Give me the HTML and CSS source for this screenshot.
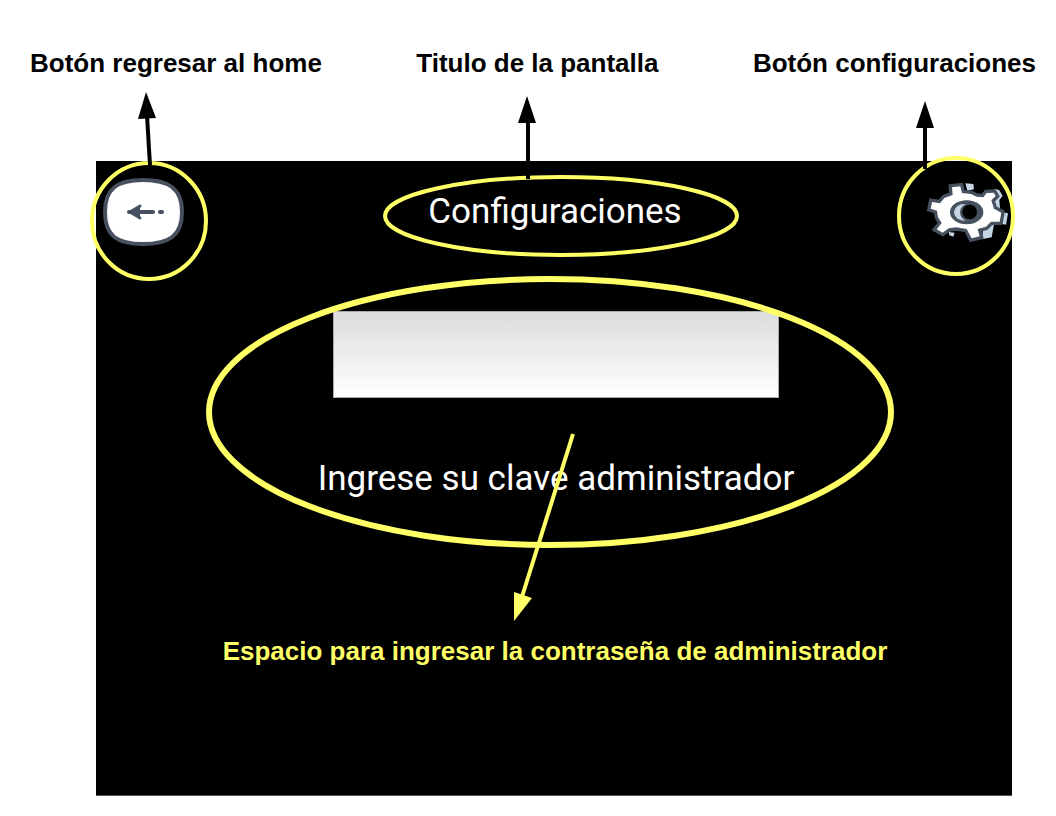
FILE: index.html
```html
<!DOCTYPE html>
<html lang="es">
<head>
<meta charset="utf-8">
<meta name="viewport" content="width=device-width, initial-scale=1">
<title>Configuraciones</title>
<link rel="stylesheet" href="styles.css">
</head>
<body>
<main class="guide">
  <div class="captions">
    <p class="caption">Botón regresar al home</p>
    <p class="caption">Titulo de la pantalla</p>
    <p class="caption">Botón configuraciones</p>
  </div>

  <section class="screen">
    <header class="header">
      <div class="anchor">
        <button class="icon-button" type="button" aria-label="Regresar al home">
          <svg class="icon" viewBox="0 0 82 68" aria-hidden="true">
            <path d="M3 34C3 10 16 2 41 2S80 10 80 34S67 66 41 66S3 58 3 34Z" fill="#fff" stroke="#46505f" stroke-width="4"/>
            <path d="M27 34H51M58 34H60" fill="none" stroke="#46505f" stroke-width="4" stroke-linecap="round"/>
            <path d="M38 28L28 34L38 40" fill="#46505f" stroke="#46505f" stroke-width="3" stroke-linecap="round" stroke-linejoin="round"/>
          </svg>
        </button>
        <svg class="note" viewBox="0 0 82 68" aria-hidden="true">
          <ellipse class="ring" cx="47" cy="43" rx="57" ry="58"/>
          <path class="arrow-line" d="M48 -13L45 -62"/>
          <path class="arrow-head" d="M44 -86L54 -60L36 -59Z"/>
        </svg>
      </div>

      <div class="anchor">
        <h1 class="title">Configuraciones</h1>
        <svg class="note note-title" viewBox="0 0 252 68" aria-hidden="true">
          <ellipse class="ring" cx="132" cy="38" rx="176" ry="39"/>
          <path class="arrow-line" d="M99 1V-56"/>
          <path class="arrow-head" d="M98 -82L107 -55H89Z"/>
        </svg>
      </div>

      <div class="anchor">
        <button class="icon-button" type="button" aria-label="Configuraciones">
          <svg class="icon" viewBox="0 12 246 204" aria-hidden="true">
            <path d="M118 28L142 30L144 46L124 50ZM206 44L220 49L230 66L220 78L222 102L208 108L200 76ZM226 114L246 118L240 152L226 149ZM172 160L204 150L197 190L168 196ZM68 174L86 176L82 188L70 184Z" fill="#c5d5e6"/>
            <path d="M78 40L103 37L108 57L135 60L152 68L172 70L182 57L203 56L209 66L196 79L204 104L226 116L221 143L195 143L180 158L155 165L161 187L137 193L122 165L90 160L68 163L50 176L32 166L47 147L36 130L33 110L14 104L18 84L42 88L55 72L80 63Z" fill="#46505f" stroke="#46505f" stroke-width="20" stroke-linejoin="miter"/>
            <path d="M78 40L103 37L108 57L135 60L152 68L172 70L182 57L203 56L209 66L196 79L204 104L226 116L221 143L195 143L180 158L155 165L161 187L137 193L122 165L90 160L68 163L50 176L32 166L47 147L36 130L33 110L14 104L18 84L42 88L55 72L80 63Z" fill="#fff"/>
            <ellipse cx="122" cy="115" rx="50" ry="36" fill="#46505f"/>
            <ellipse cx="114" cy="115" rx="30" ry="25" fill="#c5d5e6"/>
            <ellipse cx="130" cy="115" rx="28" ry="27" fill="#46505f"/>
            <circle cx="131" cy="114" r="22" fill="#000"/>
          </svg>
        </button>
        <svg class="note" viewBox="0 0 82 68" aria-hidden="true">
          <ellipse class="ring" cx="30" cy="38" rx="57" ry="58"/>
          <path class="arrow-line" d="M-1 -9V-52"/>
          <path class="arrow-head" d="M-1 -77L8 -50H-10Z"/>
        </svg>
      </div>
    </header>

    <form class="login">
      <input class="field" id="clave" type="password">
      <label class="prompt" for="clave">Ingrese su clave administrador</label>
      <svg class="note note-login" viewBox="0 0 446 190" aria-hidden="true">
        <ellipse class="ring ring-large" cx="217" cy="101" rx="341" ry="133"/>
        <path class="ring" d="M240 123L188 289"/>
        <path class="arrow-head arrow-head-yellow" d="M181 310L181 281L199 287Z"/>
      </svg>
    </form>

    <p class="caption caption-yellow">Espacio para ingresar la contraseña de administrador</p>
  </section>
</main>
</body>
</html>
```
FILE: styles.css
```css
* {
  box-sizing: border-box;
}

body {
  margin: 0;
  background: #fff;
  color: #000;
  font-family: "Liberation Sans", Arial, sans-serif;
}

.guide {
  padding: 48px 0 20px;
}

.captions {
  display: flex;
  justify-content: space-between;
  padding: 0 20px 0 30px;
}

.caption {
  margin: 0;
  font-size: 26px;
  font-weight: 700;
  line-height: 30px;
}

.screen {
  min-height: 635px;
  margin: 83px 44px 0 96px;
  padding: 17px 4px 0 6px;
  border-bottom: 1px solid #555;
  background: #000;
  color: #fff;
}

.header {
  display: flex;
  justify-content: space-between;
  align-items: center;
}

.anchor {
  position: relative;
}

.icon-button {
  display: block;
  width: 82px;
  height: 68px;
  padding: 0;
  border: 0;
  background: none;
  cursor: pointer;
}

.icon {
  display: block;
  width: 100%;
  height: 100%;
  overflow: visible;
}

.title {
  margin: 0;
  font: 400 35px/68px Roboto, sans-serif;
}

.note {
  position: absolute;
  top: 0;
  left: 0;
  width: 82px;
  height: 68px;
  overflow: visible;
  pointer-events: none;
}

.note-title {
  left: calc(50% - 126px);
  width: 252px;
}

.ring {
  fill: none;
  stroke: #ff6;
  stroke-width: 4;
}

.ring-large {
  stroke-width: 6;
}

.arrow-line {
  fill: none;
  stroke: #000;
  stroke-width: 4;
}

.arrow-head {
  fill: #000;
}

.arrow-head-yellow {
  fill: #ff6;
}

.login {
  position: relative;
  display: flex;
  flex-direction: column;
  align-items: center;
  margin-top: 65px;
  margin-left: 2px;
}

.field {
  width: 446px;
  max-width: 100%;
  height: 87px;
  padding: 0 16px;
  border: 1px solid #aaa;
  border-radius: 0;
  background: linear-gradient(#dcdcdc, #fff);
  font-size: 36px;
}

.prompt {
  margin-top: 59px;
  font: 400 35px/44px Roboto, sans-serif;
}

.note-login {
  left: calc(50% - 223px);
  width: 446px;
  height: 190px;
}

.caption-yellow {
  margin-top: 135px;
  color: #ff6;
  text-align: center;
}
```
